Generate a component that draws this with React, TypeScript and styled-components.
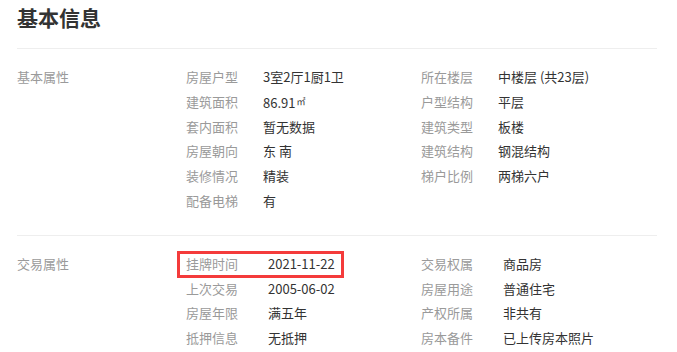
import React from "react";
import styled, { createGlobalStyle } from "styled-components";

const GlobalStyle = createGlobalStyle`
  html, body {
    margin: 0;
    padding: 0;
    background: #ffffff;
    overflow: hidden;
  }
  body {
    font-family: "Noto Sans CJK SC", "Microsoft YaHei", "Liberation Sans", sans-serif;
    -webkit-font-smoothing: antialiased;
  }
`;

const ROW = 24.8;

const Page = styled.div`
  width: 640px;
  margin-left: 17px;
`;

const Title = styled.h2`
  margin: 0;
  height: 48px;
  line-height: 34px;
  font-size: 21px;
  font-weight: 700;
  color: #333333;
`;

const Section = styled.section<{ $bottom: number }>`
  display: grid;
  grid-template-columns: 169px 1fr;
  border-top: 1px solid #eeeeee;
  padding: 16px 0 ${(p) => p.$bottom}px;
`;

const SectionLabel = styled.div`
  font-size: 13px;
  line-height: ${ROW}px;
  color: #9a9a9a;
`;

const Items = styled.ul`
  list-style: none;
  margin: 0;
  padding: 0;
  display: grid;
  grid-template-columns: 235px 1fr;
  grid-auto-rows: ${ROW}px;
`;

const Item = styled.li`
  display: flex;
  font-size: 13px;
  line-height: ${ROW}px;
`;

const Pair = styled.span<{ $marked?: boolean }>`
  position: relative;
  display: inline-flex;
  ${(p) =>
    p.$marked &&
    `
    &::after {
      content: "";
      position: absolute;
      top: -1px;
      bottom: -1px;
      left: -9px;
      right: -9px;
      border: 3px solid #f43b3b;
      pointer-events: none;
    }
  `}
`;

const Label = styled.span<{ $width: number }>`
  width: ${(p) => p.$width}px;
  color: #9a9a9a;
  flex: none;
`;

const Value = styled.span`
  color: #333333;
  white-space: nowrap;
`;

const Sup = styled.span`
  font-size: 9px;
  vertical-align: 3px;
  margin-left: 1px;
`;

type Row = { label: string; value: React.ReactNode; marked?: boolean };

const basic: Row[] = [
  { label: "房屋户型", value: "3室2厅1厨1卫" },
  { label: "所在楼层", value: "中楼层 (共23层)" },
  {
    label: "建筑面积",
    value: (
      <>
        86.91<Sup>㎡</Sup>
      </>
    ),
  },
  { label: "户型结构", value: "平层" },
  { label: "套内面积", value: "暂无数据" },
  { label: "建筑类型", value: "板楼" },
  { label: "房屋朝向", value: "东 南" },
  { label: "建筑结构", value: "钢混结构" },
  { label: "装修情况", value: "精装" },
  { label: "梯户比例", value: "两梯六户" },
  { label: "配备电梯", value: "有" },
];

const trade: Row[] = [
  { label: "挂牌时间", value: "2021-11-22", marked: true },
  { label: "交易权属", value: "商品房" },
  { label: "上次交易", value: "2005-06-02" },
  { label: "房屋用途", value: "普通住宅" },
  { label: "房屋年限", value: "满五年" },
  { label: "产权所属", value: "非共有" },
  { label: "抵押信息", value: "无抵押" },
  { label: "房本备件", value: "已上传房本照片" },
];

function InfoSection({
  title,
  rows,
  labelWidth,
  bottom,
}: {
  title: string;
  rows: Row[];
  labelWidth: number;
  bottom: number;
}) {
  return (
    <Section $bottom={bottom}>
      <SectionLabel>{title}</SectionLabel>
      <Items>
        {rows.map((r) => (
          <Item key={r.label}>
            <Pair $marked={r.marked}>
              <Label $width={labelWidth}>{r.label}</Label>
              <Value>{r.value}</Value>
            </Pair>
          </Item>
        ))}
      </Items>
    </Section>
  );
}

export default function App() {
  return (
    <>
      <GlobalStyle />
      <Page>
        <Title>基本信息</Title>
        <InfoSection title="基本属性" rows={basic} labelWidth={77} bottom={21} />
        <InfoSection title="交易属性" rows={trade} labelWidth={82} bottom={21} />
      </Page>
    </>
  );
}
